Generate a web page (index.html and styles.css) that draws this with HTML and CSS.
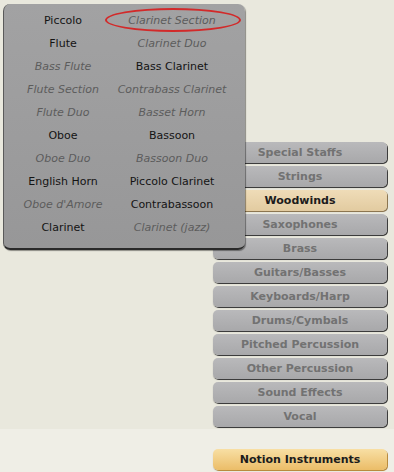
FILE: index.html
```html
<!DOCTYPE html>
<html lang="en">
<head>
    <meta charset="UTF-8">
    <title>Notion Instruments</title>
    <link rel="stylesheet" href="styles.css">
</head>
<body>

    <!-- Instrument families -->
    <div class="families">
        <div class="family-list">
            <div class="family">Special Staffs</div>
            <div class="family">Strings</div>
            <div class="family active">Woodwinds</div>
            <div class="family">Saxophones</div>
            <div class="family">Brass</div>
            <div class="family">Guitars/Basses</div>
            <div class="family">Keyboards/Harp</div>
            <div class="family">Drums/Cymbals</div>
            <div class="family">Pitched Percussion</div>
            <div class="family">Other Percussion</div>
            <div class="family">Sound Effects</div>
            <div class="family">Vocal</div>
        </div>
        <div class="footer">
            <div class="family notion">Notion Instruments</div>
        </div>
    </div>

    <!-- Woodwinds popup menu -->
    <div class="popup">
        <div class="item">Piccolo</div>
        <div class="item dim circled">Clarinet Section</div>
        <div class="item">Flute</div>
        <div class="item dim">Clarinet Duo</div>
        <div class="item dim">Bass Flute</div>
        <div class="item">Bass Clarinet</div>
        <div class="item dim">Flute Section</div>
        <div class="item dim">Contrabass Clarinet</div>
        <div class="item dim">Flute Duo</div>
        <div class="item dim">Basset Horn</div>
        <div class="item">Oboe</div>
        <div class="item">Bassoon</div>
        <div class="item dim">Oboe Duo</div>
        <div class="item dim">Bassoon Duo</div>
        <div class="item">English Horn</div>
        <div class="item">Piccolo Clarinet</div>
        <div class="item dim">Oboe d'Amore</div>
        <div class="item">Contrabassoon</div>
        <div class="item">Clarinet</div>
        <div class="item dim">Clarinet (jazz)</div>
    </div>

</body>
</html>
```

FILE: styles.css
```css
body {
    margin: 0;
    width: 394px;
    height: 472px;
    overflow: hidden;
    position: relative;
    background-color: #ecebe0;
    font-family: "DejaVu Sans", Verdana, sans-serif;
}

.families {
    display: flex;
    flex-direction: column;
}

.family-list {
    display: flex;
    flex-direction: column;
    gap: 3px;
    padding: 142px 7px 2px 213px;
    background-color: #e9e8dd;
}

.footer {
    padding: 20px 7px 2px 213px;
    background-color: #efeee6;
}

.family {
    height: 21px;
    line-height: 21px;
    text-align: center;
    font-size: 11px;
    font-weight: bold;
    color: #727272;
    border-radius: 5px;
    background: linear-gradient(#b9b9bb, #a8a8aa);
    box-shadow: 1px 1px 0 #3c3c3c, 0 1px 1px rgba(0, 0, 0, 0.3);
}

.family.active {
    color: #1c1c1c;
    background: linear-gradient(#efdcb8, #e2cba0);
    box-shadow: 1px 1px 0 #8c7650, 0 1px 1px rgba(0, 0, 0, 0.2);
}

.family.notion {
    color: #1c1c1c;
    background: linear-gradient(#f8dfa4, #ebbd68);
    box-shadow: 1px 1px 0 #b98b3e, 0 1px 1px rgba(0, 0, 0, 0.2);
}

/* popup menu lies over the family buttons */
.popup {
    position: absolute;
    left: 3px;
    top: 4px;
    width: 242px;
    height: 246px;
    box-sizing: border-box;
    padding: 5px 0 0 0;
    display: grid;
    grid-template-columns: 118px 100px;
    grid-auto-rows: 23px;
    border-radius: 7px;
    background: linear-gradient(#a2a2a3, #979798);
    border-bottom: 2px solid #2a2a2a;
    border-left: 1px solid #5a5a5a;
    box-shadow: 1px 1px 1px rgba(0, 0, 0, 0.4);
}

.item {
    margin: 0 -10px;
    text-align: center;
    line-height: 23px;
    font-size: 11px;
    color: #141414;
    white-space: nowrap;
}

.item.dim {
    font-style: italic;
    color: #5c5c5c;
}

.item.circled {
    position: relative;
}

.item.circled::after {
    content: "";
    position: absolute;
    left: -7px;
    right: -9px;
    top: -1px;
    bottom: 0;
    border: 2px solid #d22a2a;
    border-radius: 50%;
}
```
